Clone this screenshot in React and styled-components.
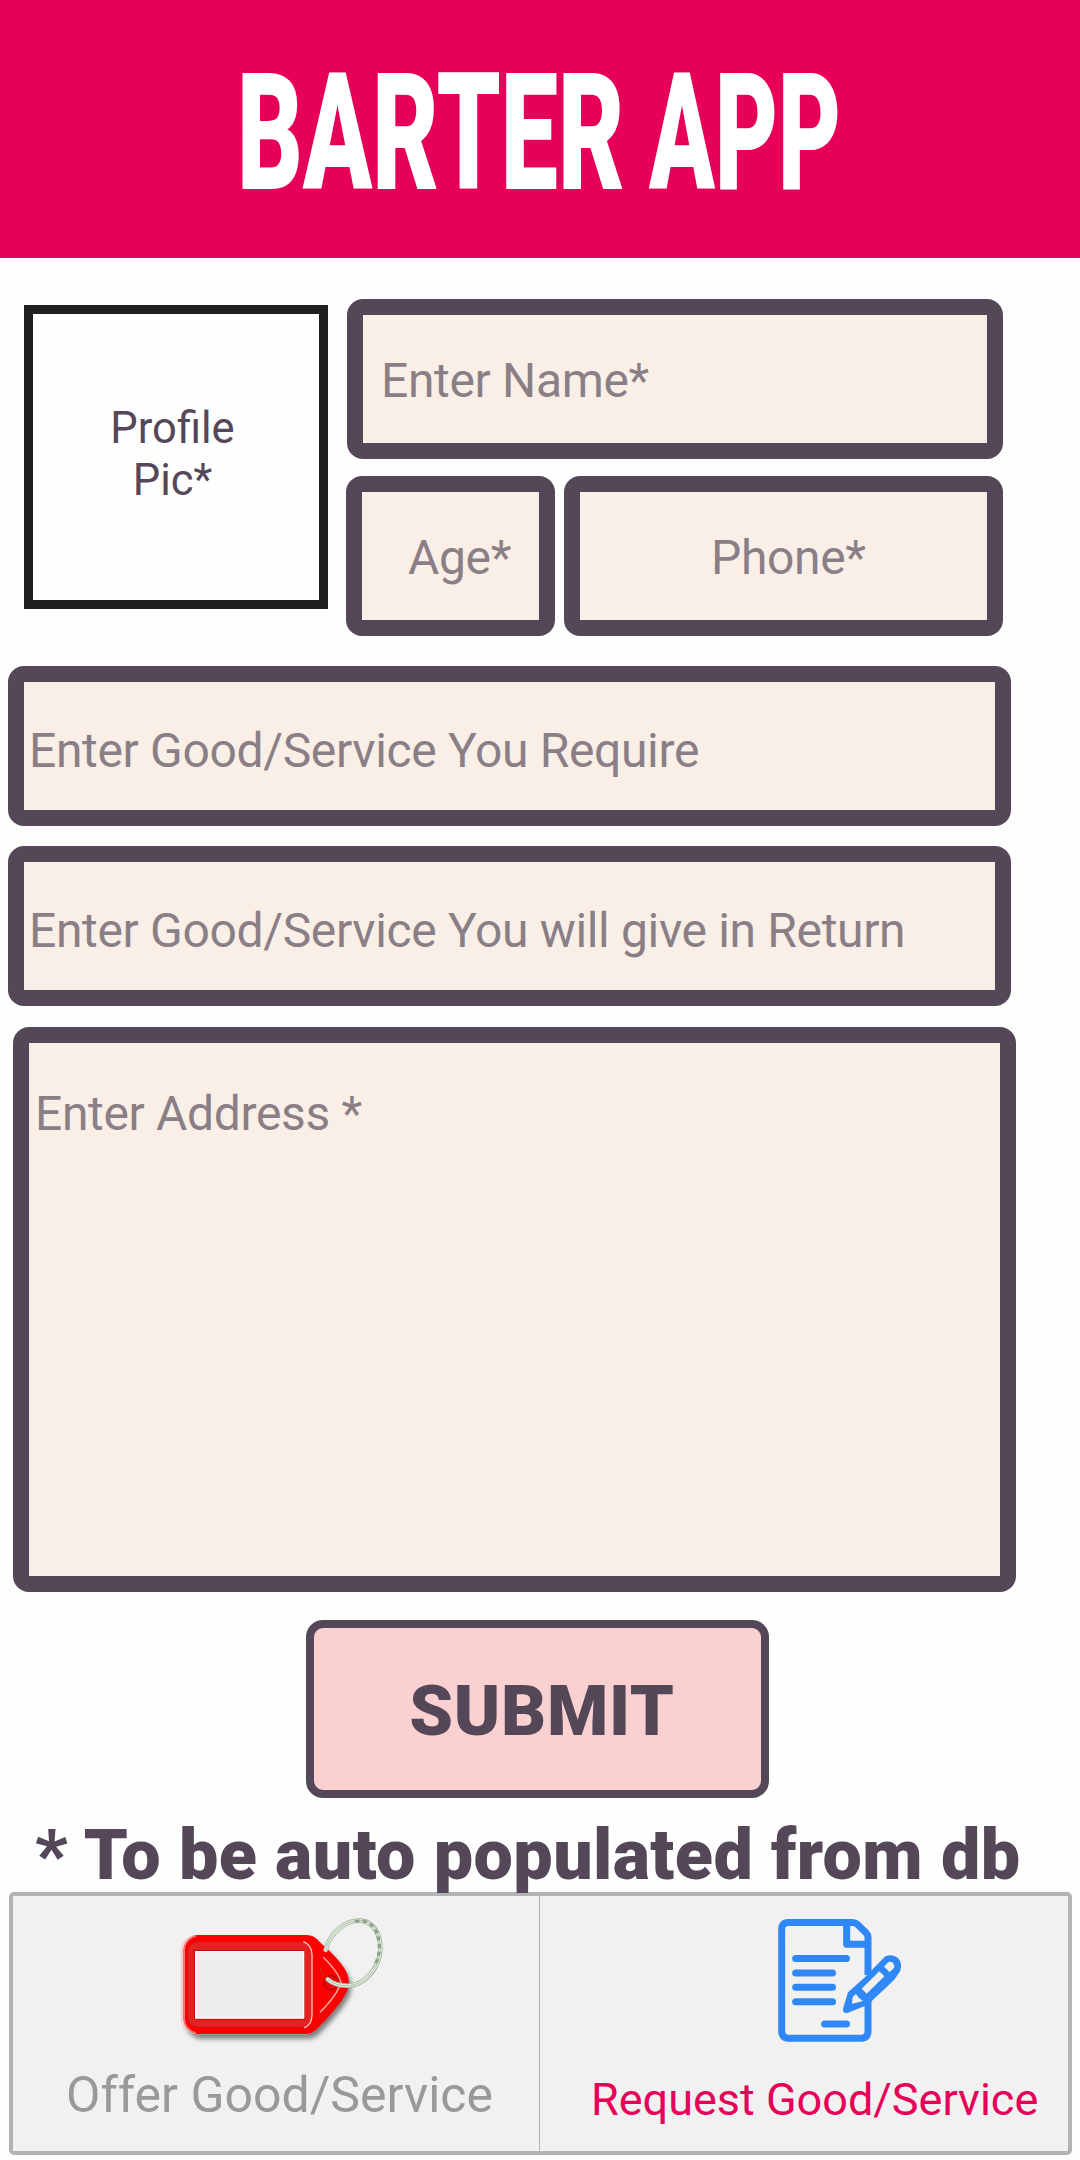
import React from "react";
import styled, { createGlobalStyle } from "styled-components";

const GlobalStyle = createGlobalStyle`
  * { box-sizing: border-box; }
  body { margin: 0; background: #fff; font-family: Roboto, "Liberation Sans", sans-serif; }
`;

const plum = "#534758";
const pink = "#e60058";

const Screen = styled.div`
  width: 1080px;
  height: 2160px;
  overflow: hidden;
  background: #fefefe;
  display: flex;
  flex-direction: column;
`;

const Header = styled.header`
  height: 258px;
  flex: none;
  background: ${pink};
  display: flex;
  align-items: center;
  padding: 10px 0 0 237px;
`;

const Title = styled.h1`
  display: flex;
  margin: 0;
  color: #fff;
  font-size: 163px;
  font-weight: 900;
  line-height: 180px;
  white-space: pre;
`;

const Word = styled.span`
  flex: none;
  width: ${(p) => p.$w}px;
  transform: scaleX(${(p) => p.$scale});
  transform-origin: left center;
`;

const Form = styled.form`
  display: flex;
  flex-direction: column;
  align-items: flex-start;
  padding: 41px 0 0 8px;
`;

const ProfileRow = styled.div`
  display: flex;
  align-items: flex-start;
  padding-left: 16px;
  margin-bottom: 30px;
`;

const ProfilePic = styled.div`
  width: 304px;
  height: 304px;
  margin: 6px 18px 0 0;
  padding: 0 7px 4px 0;
  border: 9px solid #202020;
  display: flex;
  align-items: center;
  justify-content: center;
  text-align: center;
  color: ${plum};
  font-size: 43.500px;
  line-height: 52px;
`;

const Details = styled.div`
  display: flex;
  flex-direction: column;
  align-items: flex-end;
  gap: 17px;
`;

const Pair = styled.div`
  display: flex;
  gap: 9px;
`;

const Field = styled.div`
  width: ${(p) => p.$w}px;
  height: ${(p) => p.$h || 160}px;
  margin: ${(p) => p.$margin || 0};
  padding: ${(p) => p.$pad};
  border-radius: 16px;
  background: linear-gradient(#faefe6, #faefe6) padding-box, ${plum};
  border: 16px solid ${plum};
  display: flex;
  align-items: ${(p) => (p.$top ? "flex-start" : "center")};
  color: #8a7f86;
  font-size: 48px;
  line-height: 56px;
  letter-spacing: -0.34px;
  white-space: nowrap;
`;

const Submit = styled.button`
  width: 463px;
  height: 178px;
  margin: 28px 0 0 298px;
  padding: 4px 0 0 9px;
  border: 8px solid ${plum};
  border-radius: 17px;
  background: #fad0d0;
  color: ${plum};
  font-family: inherit;
  font-size: 70px;
  font-weight: 900;
  line-height: 80px;
  letter-spacing: 0.7px;
`;

const Note = styled.p`
  position: relative;
  z-index: 1;
  margin: 17px 0 -3px 27px;
  color: ${plum};
  font-size: 70px;
  font-weight: 900;
  line-height: 80px;
  letter-spacing: 0.42px;
  white-space: nowrap;
`;

const TabBar = styled.nav`
  width: 1063px;
  height: 263px;
  flex: none;
  margin-left: 9px;
  border: 4px solid #b3b3b3;
  border-radius: 5px;
  background: #f1f1f1;
  display: flex;
`;

const Tab = styled.div`
  flex: none;
  width: ${(p) => p.$w}px;
  padding: 4px 0 0 ${(p) => p.$left}px;
  border-right: ${(p) => (p.$divider ? "1px solid #b3b3b3" : "none")};
  display: flex;
  flex-direction: column;
  align-items: flex-start;
`;

const TabIcon = styled.svg`
  display: block;
  flex: none;
  margin-left: ${(p) => p.$left}px;
`;

const TabLabel = styled.span`
  margin-top: ${(p) => p.$top}px;
  font-size: ${(p) => p.$size}px;
  line-height: 60px;
  color: ${(p) => p.$color};
  white-space: nowrap;
`;

const TAG =
  "M108 105 H435 C460 105 468 118 482 132 C515 160 548 195 559 222 Q568 246 559 272 C545 305 500 355 468 387 Q453 402 435 402 H108 C85 397 68 378 68 355 V152 C68 128 85 110 108 105 Z";
const RING =
  "M497 150 C508 98 562 57 603 62 C642 66 662 104 661 150 C658 205 612 258 560 257 C536 257 516 250 503 238";

function KeyTagIcon() {
  return (
    <TabIcon $left={94} width="240" height="150" viewBox="0 0 720 450">
      <defs>
        <filter id="tagShadow" x="-20%" y="-20%" width="140%" height="150%">
          <feGaussianBlur stdDeviation="8" />
        </filter>
        <linearGradient id="tagEdge" x1="0" x2="1">
          <stop offset="0" stopColor="#f8d0d0" />
          <stop offset="1" stopColor="#ff6a6a" />
        </linearGradient>
      </defs>
      <path d={TAG} fill="#555" opacity="0.75" transform="translate(10 14)" filter="url(#tagShadow)" />
      <path d={TAG} fill="url(#tagEdge)" transform="translate(-6 0)" />
      <path d={TAG} fill="#9aa5a2" transform="translate(2 2)" />
      <path d={TAG} fill="#fe0000" transform="translate(3 0)" />
      <path d="M108 108 C88 112 73 130 73 152 V355 C73 378 88 394 108 399" fill="none" stroke="#f77" strokeWidth="4" />
      <rect x="83" y="125" width="372" height="257" rx="30" fill="#e52222" stroke="#c01010" strokeWidth="1.5" />
      <rect x="103" y="152" width="330" height="205" fill="#eeeeec" stroke="#c40f0f" strokeWidth="4" />
      <rect x="107" y="155" width="324" height="199" fill="#eeeeec" stroke="#fff" strokeWidth="4" />
      <path d="M430 125 Q456 135 456 165 V345 Q456 374 432 384" fill="none" stroke="#ffc4c4" strokeWidth="4" />
      <path d="M490 172 Q535 216 543 246 Q533 284 480 337" fill="none" stroke="#ffb0a8" strokeWidth="4" />
      <path d="M480 204 L491 226" stroke="#b8422a" strokeWidth="3" />
      <circle cx="513" cy="248" r="21" fill="#f00808" stroke="#b40808" strokeWidth="4" />
      <path d={RING} fill="none" stroke="#9fb298" strokeWidth="14" strokeLinecap="round" />
      <path d={RING} fill="none" stroke="#e9f0e7" strokeWidth="9" strokeLinecap="round" />
      <path d={RING} fill="none" stroke="#9fb298" strokeWidth="2.5" />
      <path d="M585 64 C642 54 660 104 658 150 C656 172 650 186 643 198" fill="none" stroke="#8ea688" strokeWidth="10" strokeDasharray="13 10" />
    </TabIcon>
  );
}

function RequestIcon() {
  return (
    <TabIcon $left={159} width="180" height="150" viewBox="0 0 540 450">
      <g fill="none" stroke="#3087f6" strokeWidth="21" strokeLinejoin="round">
        <path d="M354 225 V112 Q354 104 348 98 L322 73 Q316 67.500 308 67.500 H112 Q95 70 95 87 V396 Q97 412 112 415 H336 Q353 412 354 396 V280" />
        <path d="M290 67 V133 H354" />
        <g strokeLinecap="round">
          <path d="M137 175.500 H289.500" />
          <path d="M137 219 H247.500" />
          <path d="M137 262 H247.500" />
          <path d="M137 305 H247.500" />
          <path d="M224 372 H289.500" />
        </g>
      </g>
      <path
        d="M406 169 Q428 160 444 174 Q458 190 451 212 L434 238 L410 261 L377 292 L354 314 L294 338 Q278 342 279 326 L294 277 L343 233 Z"
        fill="#3087f6"
      />
      <path d="M388 214 L403 229 L350 281 L335 266 Z" fill="#f1f1f1" />
      <path d="M415 186 Q423 184 429 189 Q435 197 432 204 L419 216 L402 200 Z" fill="#f1f1f1" />
      <path d="M318 282 L326 293 L339 303 L306 311 L308 291 Z" fill="#f1f1f1" />
    </TabIcon>
  );
}

export default function App() {
  return (
    <Screen>
      <GlobalStyle />
      <Header>
        <Title>
          <Word $w={412} $scale={0.626}>BARTER </Word>
          <Word $w={200} $scale={0.594}>APP</Word>
        </Title>
      </Header>
      <Form>
        <ProfileRow>
          <ProfilePic>
            Profile
            <br />
            Pic*
          </ProfilePic>
          <Details>
            <Field $w={656} $pad="4px 0 0 18px">Enter Name*</Field>
            <Pair>
              <Field $w={209} $pad="4px 0 0 46px">Age*</Field>
              <Field $w={439} $pad="4px 0 0 131px">Phone*</Field>
            </Pair>
          </Details>
        </ProfileRow>
        <Field $w={1003} $pad="9px 0 0 5px">Enter Good/Service You Require</Field>
        <Field $w={1003} $pad="9px 0 0 5px" $margin="20px 0 21px">
          Enter Good/Service You will give in Return
        </Field>
        <Field $w={1003} $h={565} $top $pad="43px 0 0 6px" $margin="0 0 0 5px">
          Enter Address *
        </Field>
        <Submit type="button">SUBMIT</Submit>
        <Note>* To be auto populated from db</Note>
      </Form>
      <TabBar>
        <Tab $w={527} $left={53} $divider>
          <KeyTagIcon />
          <TabLabel $top={15} $size={50} $color="#999">Offer Good/Service</TabLabel>
        </Tab>
        <Tab $w={528} $left={51}>
          <RequestIcon />
          <TabLabel $top={20} $size={45} $color={pink}>Request Good/Service</TabLabel>
        </Tab>
      </TabBar>
    </Screen>
  );
}
